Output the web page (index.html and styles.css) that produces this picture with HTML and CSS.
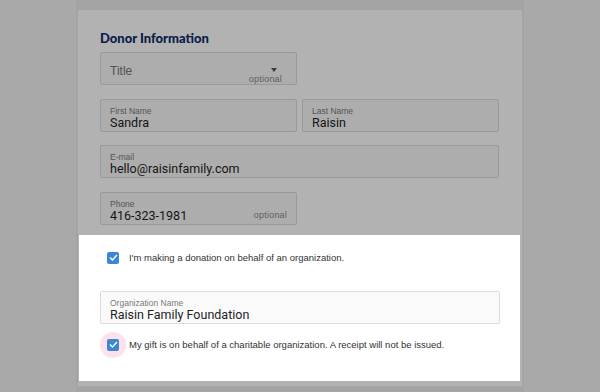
FILE: index.html
```html
<!DOCTYPE html>
<html lang="en">
<head>
    <meta charset="UTF-8">
    <meta name="viewport" content="width=device-width, initial-scale=1.0">
    <title>Donor Information</title>
    <link rel="stylesheet" href="styles.css">
</head>
<body>

    <div class="frame">
        <div class="card">
            <h2>Donor Information</h2>

            <div class="field select-field half">
                <span class="placeholder">Title</span>
                <span class="caret"></span>
                <span class="optional">optional</span>
            </div>

            <div class="row">
                <div class="field half">
                    <label>First Name</label>
                    <div class="value">Sandra</div>
                </div>
                <div class="field half">
                    <label>Last Name</label>
                    <div class="value">Raisin</div>
                </div>
            </div>

            <div class="field">
                <label>E-mail</label>
                <div class="value">hello@raisinfamily.com</div>
            </div>

            <div class="field half phone-field">
                <div>
                    <label>Phone</label>
                    <div class="value">416-323-1981</div>
                </div>
                <span class="optional">optional</span>
            </div>

            <!-- Highlighted organization section -->
            <div class="org-section">
                <div class="check-row">
                    <span class="check-wrap">
                        <span class="checkbox">
                            <svg width="9" height="7" viewBox="0 0 9 7"><path d="M1 3.6 L3.4 6 L8 1" fill="none" stroke="#fff" stroke-width="1.4"/></svg>
                        </span>
                    </span>
                    <span>I'm making a donation on behalf of an organization.</span>
                </div>

                <div class="field org-field">
                    <label>Organization Name</label>
                    <div class="value">Raisin Family Foundation</div>
                </div>

                <div class="check-row focused">
                    <span class="check-wrap">
                        <span class="checkbox">
                            <svg width="9" height="7" viewBox="0 0 9 7"><path d="M1 3.6 L3.4 6 L8 1" fill="none" stroke="#fff" stroke-width="1.4"/></svg>
                        </span>
                    </span>
                    <span>My gift is on behalf of a charitable organization. A receipt will not be issued.</span>
                </div>
            </div>
        </div>
    </div>

</body>
</html>
```

FILE: styles.css
```css
body {
    margin: 0;
    background-color: #f3f3f3;
    font-family: "Liberation Sans", Arial, sans-serif;
    height: 392px;
    overflow: hidden;
}
.frame {
    width: 444px;
    margin: 0 auto;
    padding: 10px 2px 7px;
    background-color: #ebebeb;
}
.card {
    background-color: #fff;
    padding: 20px 0 5px;
}
.card h2 {
    margin: 0 0 6px 22px;
    font-family: Lato, sans-serif;
    font-weight: 900;
    font-size: 13px;
    line-height: 16px;
    color: #0e2b6b;
}
.field {
    box-sizing: border-box;
    height: 33px;
    margin: 0 23px 13px 22px;
    padding: 6px 9px 0;
    background-color: #f8f8f8;
    border: 1px solid #dcdcdc;
    border-radius: 2px;
}
.field.half {
    width: 197px;
}
.row {
    display: flex;
    gap: 5px;
    margin: 0 23px 0 22px;
}
.row .field {
    margin: 0 0 13px;
}
.field label {
    display: block;
    font-size: 8.5px;
    line-height: 10px;
    color: #7a7a7a;
}
.field .value {
    font-family: Roboto, sans-serif;
    font-size: 12.5px;
    line-height: 14px;
    color: #1e1e1e;
}
.select-field {
    display: flex;
    align-items: center;
    position: relative;
    padding-top: 0;
    margin-bottom: 14px;
}
.placeholder {
    font-size: 12px;
    color: #777;
    margin-top: 5px;
}
.caret {
    position: absolute;
    right: 19px;
    top: 15px;
    border-left: 3.5px solid transparent;
    border-right: 3.5px solid transparent;
    border-top: 4px solid #555;
}
.select-field .optional {
    position: absolute;
    right: 14px;
    bottom: 0;
    line-height: 10px;
}
.optional {
    font-size: 9px;
    letter-spacing: 0.2px;
    color: #8a8a8a;
}
.phone-field {
    display: flex;
    justify-content: space-between;
    align-items: flex-start;
    margin-top: 14px;
    margin-bottom: 10px;
}
.phone-field .optional {
    margin-top: 11px;
}
.org-section {
    position: relative;
    z-index: 1;
    margin: 0 2px 0 1px;
    padding: 16px 0 30px;
    background-color: #fff;
    box-shadow: 0 0 0 2000px rgba(0, 0, 0, 0.3);
}
.org-section .field {
    margin: 27px 20px 14px 21px;
    background-color: #fafafa;
}
.check-row {
    display: flex;
    align-items: center;
    gap: 10px;
    margin-left: 28px;
    font-size: 9.5px;
    line-height: 13px;
    color: #333;
}
.check-wrap {
    position: relative;
    width: 12px;
    height: 12px;
}
.focused .check-wrap::before {
    content: "";
    position: absolute;
    left: -7px;
    top: -7px;
    width: 26px;
    height: 26px;
    border-radius: 50%;
    background-color: #fde2ee;
}
.checkbox {
    position: relative;
    display: flex;
    align-items: center;
    justify-content: center;
    width: 12px;
    height: 12px;
    background-color: #3c86d6;
    border-radius: 2px;
}
```
